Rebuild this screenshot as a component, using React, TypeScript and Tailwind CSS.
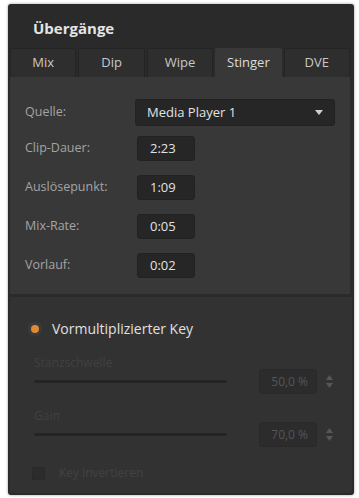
import React from 'react';

const tabs = ['Mix', 'Dip', 'Wipe', 'Stinger', 'DVE'];

const timeRows = [
    { label: 'Clip-Dauer:', value: '2:23' },
    { label: 'Auslösepunkt:', value: '1:09' },
    { label: 'Mix-Rate:', value: '0:05' },
    { label: 'Vorlauf:', value: '0:02' },
];

function Spinner() {
    return (
        <div className="flex flex-col items-center gap-[3px] ml-[9px]">
            <svg width="7" height="5" viewBox="0 0 7 5">
                <path d="M3.5 0L7 5H0z" fill="#575757" />
            </svg>
            <svg width="7" height="5" viewBox="0 0 7 5">
                <path d="M0 0h7L3.5 5z" fill="#575757" />
            </svg>
        </div>
    );
}

function SliderRow({ label, value, mt }: { label: string; value: string; mt: string }) {
    return (
        <div className={mt}>
            <div className="text-[12px] leading-[16px] text-[#414141] pl-[24px]">{label}</div>
            <div className="flex items-center pl-[24px] mt-[-2px]">
                <div className="w-[193px] h-[3px] rounded-full bg-[#242424]" />
                <div className="ml-[32px] w-[58px] h-[25px] rounded-[3px] bg-[#2c2c2c] border border-[#292929] flex items-center justify-end pr-[8px] text-[12px] text-[#555555]">
                    {value}
                </div>
                <Spinner />
            </div>
        </div>
    );
}

export default function App() {
    return (
        <div
            className="w-[359px] h-[498px] bg-white pt-[4px] pl-[8px] pr-[5px] pb-[3px]"
            style={{ fontFamily: '"Open Sans", "Noto Sans", sans-serif' }}
        >
            <div className="h-full bg-[#2a2a2a] rounded-[3px] shadow-[0_0_3px_rgba(0,0,0,0.4)] flex flex-col overflow-hidden">
                {/* header */}
                <div className="h-[44px] flex items-center pl-[25px] pt-[5px] shrink-0">
                    <span className="text-[15px] font-bold text-[#e4e4e4]">Übergänge</span>
                </div>

                {/* tabs */}
                <div className="grid grid-cols-5 gap-[2px] pl-[2px] pr-[4px] h-[29px] shrink-0">
                    {tabs.map((t) => (
                        <div
                            key={t}
                            className={
                                t === 'Stinger'
                                    ? 'bg-[#383838] rounded-t-[2px] flex items-center justify-center text-[13px] text-[#dddddd]'
                                    : 'bg-[#2e2e2e] border border-b-0 border-[#242424] rounded-t-[2px] flex items-center justify-center text-[13px] text-[#c8c8c8]'
                            }
                        >
                            {t}
                        </div>
                    ))}
                </div>

                {/* stinger settings */}
                <div className="ml-[2px] mr-[4px] bg-[#383838] h-[217px] shrink-0 pt-[22px]">
                    <div className="flex items-center">
                        <span className="w-[125px] pl-[15px] text-[12.5px] text-[#a4a4a4]">Quelle:</span>
                        <div className="w-[200px] h-[27px] rounded-[3px] bg-[#262626] border border-[#222] flex items-center justify-between pl-[11px] pr-[11px]">
                            <span className="text-[13px] text-[#e2e2e2]">Media Player 1</span>
                            <svg width="8" height="5" viewBox="0 0 8 5">
                                <path d="M0 0h8L4 5z" fill="#d0d0d0" />
                            </svg>
                        </div>
                    </div>
                    <div className="flex flex-col gap-[14px] mt-[10px]">
                        {timeRows.map((r) => (
                            <div key={r.label} className="flex items-center">
                                <span className="w-[127px] pl-[15px] text-[12.5px] text-[#a4a4a4] whitespace-nowrap">{r.label}</span>
                                <div className="w-[58px] h-[25px] rounded-[3px] bg-[#262626] border border-[#222] flex items-center pl-[12px] text-[13px] text-[#e2e2e2]">
                                    {r.value}
                                </div>
                            </div>
                        ))}
                    </div>
                </div>

                <div className="h-[3px] bg-[#2a2a2a] shrink-0" />

                {/* key settings */}
                <div className="flex-1 bg-[#323232] mx-[2px] mb-[2px] rounded-b-[2px] pt-[21px]">
                    <div className="flex items-center pl-[19px]">
                        <div className="w-[12px] h-[12px] rounded-full bg-[#3a3a3a] flex items-center justify-center shadow-[0_0_3px_rgba(70,110,150,0.5)]">
                            <div className="w-[8px] h-[8px] rounded-full bg-[#e08a32]" />
                        </div>
                        <span className="ml-[11px] text-[14px] text-[#e0e0e0]">Vormultiplizierter Key</span>
                    </div>

                    <SliderRow label="Stanzschwelle" value="50,0 %" mt="mt-[16px]" />
                    <SliderRow label="Gain" value="70,0 %" mt="mt-[14px]" />

                    <div className="flex items-center pl-[22px] mt-[17px]">
                        <div className="w-[13px] h-[13px] rounded-[2px] bg-[#2c2c2c] border border-[#292929]" />
                        <span className="ml-[14px] text-[12px] text-[#424242]">Key invertieren</span>
                    </div>
                </div>
            </div>
        </div>
    );
}
